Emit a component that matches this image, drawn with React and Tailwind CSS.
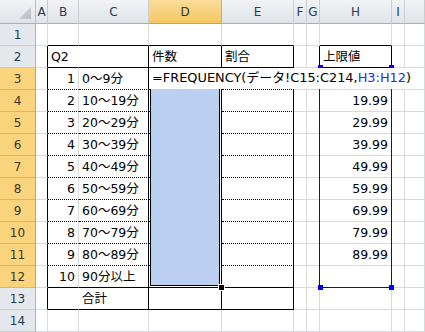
import React from 'react';

const LABELS = ['0～9分', '10～19分', '20～29分', '30～39分', '40～49分', '50～59分', '60～69分', '70～79分', '80～89分', '90分以上'];
const COLS = ['A', 'B', 'C', 'D', 'E', 'F', 'G', 'H', 'I', ''];
const LIMITS = { 4: '19.99', 5: '29.99', 6: '39.99', 7: '49.99', 8: '59.99', 9: '69.99', 10: '79.99', 11: '89.99' };

function cellText(r, c) {
  if (r === 2 && c === 1) return { t: 'Q2', a: 'l' };
  if (r === 2 && c === 3) return { t: '件数', a: 'l' };
  if (r === 2 && c === 4) return { t: '割合', a: 'l' };
  if (r === 2 && c === 7) return { t: '上限値', a: 'l' };
  if (r >= 3 && r <= 12 && c === 1) return { t: String(r - 2), a: 'r' };
  if (r >= 3 && r <= 12 && c === 2) return { t: LABELS[r - 3], a: 'l' };
  if (r === 13 && c === 2) return { t: '合計', a: 'l' };
  if (c === 7 && LIMITS[r]) return { t: LIMITS[r], a: 'r' };
  return null;
}

function BodyCell({ r, c }) {
  const inTable = c >= 1 && c <= 4;
  let right = 'border-r-[#d7d9dd]';
  let bottom = 'border-b-[#d7d9dd]';
  let dotted = false;
  if (r === 1 && (inTable || c === 7)) bottom = 'border-b-black';
  if (r >= 2 && r <= 13) {
    if (c === 0) right = 'border-r-black';
    if (c === 1 && (r === 2 || r === 13)) right = 'border-r-white';
    if (c >= 2 && c <= 4) right = 'border-r-black';
    if (inTable) {
      bottom = 'border-b-black';
      if (r >= 3 && r <= 11) dotted = true;
    }
  }
  if (r === 2 && (c === 6 || c === 7)) right = 'border-r-black';
  if (r === 2 && c === 7) bottom = 'border-b-black';
  const txt = cellText(r, c);
  return (
    <div
      className={
        'relative flex items-center whitespace-nowrap overflow-visible bg-white border-r border-b ' +
        right + ' ' + bottom + ' ' + (dotted ? '[border-bottom-style:dotted] ' : '') +
        (txt && txt.a === 'r' ? 'justify-end pr-[3px]' : 'justify-start pl-[3px]')
      }
    >
      {txt && <span className="relative z-10 pt-[1px] text-black">{txt.t}</span>}
    </div>
  );
}

export default function App() {
  const rows = Array.from({ length: 14 }, (_, i) => i + 1);
  return (
    <div className="w-[425px] h-[332px] overflow-hidden bg-white">
      <div className="relative font-['DejaVu_Sans','Noto_Sans_CJK_JP',sans-serif] text-[12.5px] leading-none">
        <div className="grid grid-cols-[36px_12px_31px_70px_73px_72px_13px_13px_72px_13px_20px] grid-rows-[24px_repeat(14,22px)]">
          {/* corner */}
          <div className="relative bg-gradient-to-b from-[#f1f3f5] to-[#dfe3e8] border-r border-b border-r-[#b7bec7] border-b-[#a9b1bb]">
            <svg className="absolute left-0 top-0" width="36" height="24" viewBox="0 0 36 24">
              <defs>
                <linearGradient id="tri" x1="0" y1="0" x2="1" y2="1">
                  <stop offset="0" stopColor="#d6dadf" />
                  <stop offset="1" stopColor="#b7bcc3" />
                </linearGradient>
              </defs>
              <polygon points="19,19 31,7 31,19" fill="url(#tri)" />
            </svg>
          </div>
          {COLS.map((l, c) =>
            c === 3 ? (
              <div key={c} className="flex items-center justify-center pt-[1px] bg-gradient-to-b from-[#f9dd98] to-[#f4c65f] border-r border-b border-r-[#e0a94a] border-b-[#e19a34] text-[#3b3420] text-[12px]">
                {l}
              </div>
            ) : (
              <div key={c} className="flex items-center justify-center pt-[1px] bg-gradient-to-b from-[#f1f3f5] to-[#dfe3e8] border-r border-b border-r-[#c8cdd4] border-b-[#a9b1bb] text-[#243c5c] text-[12px]">
                {l}
              </div>
            )
          )}
          {rows.map((r) => (
            <React.Fragment key={r}>
              {r >= 3 && r <= 12 ? (
                <div className="flex items-center justify-center pt-[1px] bg-[#f9d47d] border-r border-b border-r-[#d9a040] border-b-[#e3b459] text-[#3b3420] text-[12px]">
                  {r}
                </div>
              ) : (
                <div className="flex items-center justify-center pt-[1px] bg-[#e4e7eb] border-r border-b border-r-[#a9b1bb] border-b-[#c8cdd4] text-[#243c5c] text-[12px]">
                  {r}
                </div>
              )}
              {COLS.map((_, c) => (
                <BodyCell key={c} r={r} c={c} />
              ))}
            </React.Fragment>
          ))}
        </div>

        {/* selection D3:D12 */}
        <div className="absolute left-[150px] top-[70px] w-[70px] h-[216px] border border-black bg-[#bbd0f0] z-20" />
        {/* fill handle */}
        <div className="absolute left-[219px] top-[285px] w-[5px] h-[5px] bg-black ring-1 ring-white z-30" />

        {/* referenced range H3:H12 */}
        <div className="absolute left-[319px] top-[68px] w-[73px] h-[220px] border border-[#0000ff] z-20" />
        <div className="absolute left-[318px] top-[65px] w-[5px] h-[5px] bg-[#0000ff] z-20" />
        <div className="absolute left-[389px] top-[65px] w-[5px] h-[5px] bg-[#0000ff] z-20" />
        <div className="absolute left-[318px] top-[285px] w-[5px] h-[5px] bg-[#0000ff] z-20" />
        <div className="absolute left-[389px] top-[285px] w-[5px] h-[5px] bg-[#0000ff] z-20" />

        {/* edit box */}
        <div className="absolute left-[149px] top-[68px] w-[256px] h-[21px] bg-white z-40 flex items-center pl-[3px] whitespace-nowrap text-[12.9px]">
          <span className="text-black">
            =FREQUENCY(データ!C15:C214,<span className="text-[#2222ff]">H3:H12</span>)
          </span>
          <span className="ml-[2px] w-[1px] h-[14px] mt-[3px] bg-black" />
        </div>
      </div>
    </div>
  );
}
